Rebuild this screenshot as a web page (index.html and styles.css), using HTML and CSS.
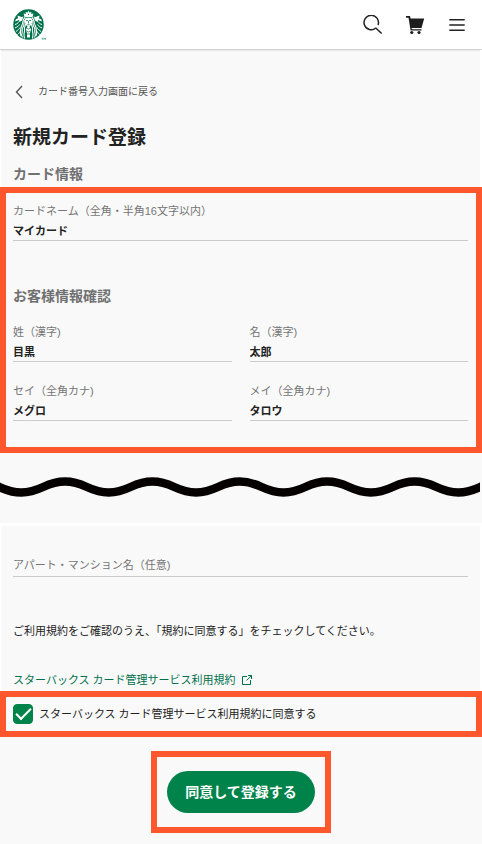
FILE: index.html
```html
<!DOCTYPE html>
<html lang="ja">
<head>
  <meta charset="UTF-8">
  <meta name="viewport" content="width=device-width, initial-scale=1">
  <title>新規カード登録</title>
  <link rel="stylesheet" href="styles.css">
</head>
<body>
  <header class="header">
    <a class="logo" href="#" aria-label="スターバックス">
      <svg width="33" height="32" viewBox="0 0 66 64">
        <circle cx="31" cy="31" r="30.500" fill="#00704a"/>
        <!-- crown -->
        <path d="M31 3l1.800 4 4-1-.5 4 4.500-.8-1.800 7.300H23l-1.800-7.300 4.500.8-.5-4 4 1z" fill="#fff"/>
        <path d="M31 8.500l1.500 3.500h-3z" fill="#00704a"/>
        <!-- tails -->
        <g fill="none" stroke="#fff" stroke-width="2">
          <path d="M12 25c-2 3-4 5-8 6M13 31c-2 3-4 5-9 7M14 37c-1 3-4 5-8 8M15 43c-1 3-3 5-6 8"/>
          <path d="M50 25c2 3 4 5 8 6M49 31c2 3 4 5 9 7M48 37c1 3 4 5 8 8M47 43c1 3 3 5 6 8"/>
        </g>
        <path d="M9 13l8 3 4-1-3 8-5 3-1-4-8 3 2-5 4-1z M53 13l-8 3-4-1 3 8 5 3 1-4 8 3-2-5-4-1z" fill="#fff"/>
        <!-- hair -->
        <g fill="none" stroke="#fff" stroke-width="2.200">
          <path d="M24 17c-6 5-3 10-6 15s-2 8-3 13 0 7 1 9"/>
          <path d="M24 22c-4 5 0 9-4 14s0 8-2 12 0 7 1 9"/>
          <path d="M25 30c0 5-3 6-2 10s-1 7-1 11 1 6 1 8"/>
          <path d="M38 17c6 5 3 10 6 15s2 8 3 13 0 7-1 9"/>
          <path d="M38 22c4 5 0 9 4 14s0 8 2 12 0 7-1 9"/>
          <path d="M37 30c0 5 3 6 2 10s1 7 1 11-1 6-1 8"/>
        </g>
        <!-- face and body -->
        <path d="M24 19q7-3 14 0v9q-2 5-5 7l3 6-2 7v9h-6v-9l-2-7 3-6q-3-2-5-7z" fill="#fff"/>
        <path d="M26 23h4M32 23h4M31 24v5M28.500 31.500h5M28 38l3 2 3-2M28 44l3 2 3-2M28 50h6" fill="none" stroke="#00704a" stroke-width="1.500"/>
        <path d="M57 58h4M59 58v4M62 62v-4l1.500 2 1.500-2v4" fill="none" stroke="#00704a" stroke-width=".8"/>
      </svg>
    </a>
    <nav class="header-nav">
      <button class="icon-button" type="button" aria-label="検索">
        <svg width="20" height="20" viewBox="0 0 20 20" fill="none" stroke="#222" stroke-width="1.500">
          <path d="M12.900 13A7.200 7.200 0 1 1 15 10"/>
          <path d="M12.500 12.700l6.200 5.800"/>
        </svg>
      </button>
      <button class="icon-button" type="button" aria-label="カート">
        <svg width="20" height="20" viewBox="0 0 20 20" fill="#1e1e1e">
          <path d="M1 1h4l.6 2.500h13.600L16.500 13H6.600l.3 1.200h9.600v1.300H5.600L3.500 2.700H1z"/>
          <circle cx="6.800" cy="17.500" r="1.600"/>
          <circle cx="14" cy="17.500" r="1.600"/>
        </svg>
      </button>
      <button class="icon-button" type="button" aria-label="メニュー">
        <svg width="20" height="20" viewBox="0 0 20 20" fill="none" stroke="#222" stroke-width="1.600">
          <path d="M2.300 4.700h15.400M2.300 10h15.400M2.300 15.200h15.400"/>
        </svg>
      </button>
    </nav>
  </header>

  <form class="form">
    <div class="intro">
      <a class="back" href="#">
        <svg width="10" height="14" viewBox="0 0 10 14" fill="none" stroke="#555" stroke-width="1.400"><path d="M8 1L2.500 7 8 13"/></svg>
        カード番号入力画面に戻る
      </a>
      <h1 class="title">新規カード登録</h1>
      <h2 class="subtitle">カード情報</h2>
    </div>

    <section class="highlight details">
      <div class="field">
        <label for="cardName">カードネーム（全角・半角16文字以内）</label>
        <input id="cardName" type="text" value="マイカード">
      </div>
      <h2 class="subtitle customer">お客様情報確認</h2>
      <div class="names">
        <div class="field">
          <label for="lastName">姓（漢字)</label>
          <input id="lastName" type="text" value="目黒">
        </div>
        <div class="field">
          <label for="firstName">名（漢字)</label>
          <input id="firstName" type="text" value="太郎">
        </div>
        <div class="field">
          <label for="lastKana">セイ（全角カナ)</label>
          <input id="lastKana" type="text" value="メグロ">
        </div>
        <div class="field">
          <label for="firstKana">メイ（全角カナ)</label>
          <input id="firstKana" type="text" value="タロウ">
        </div>
      </div>
    </section>

    <div class="wave">
      <svg viewBox="0 0 480 22" preserveAspectRatio="none">
        <path d="M-22.400 5.500c20 0 23.700 11 43.700 11s23.700-11 43.700-11 23.700 11 43.700 11 23.700-11 43.700-11 23.700 11 43.700 11 23.700-11 43.700-11 23.700 11 43.700 11 23.700-11 43.700-11 23.700 11 43.700 11 23.700-11 43.700-11 23.700 11 43.700 11 23.700-11 43.700-11" fill="none" stroke="#050101" stroke-width="8.500"/>
      </svg>
    </div>

    <section class="terms">
      <input class="address" type="text" placeholder="アパート・マンション名（任意)" aria-label="アパート・マンション名（任意)">
      <p class="note">ご利用規約をご確認のうえ、「規約に同意する」をチェックしてください。</p>
      <a class="terms-link" href="#">
        スターバックス カード管理サービス利用規約
        <svg width="10" height="10" viewBox="0 0 10 10" fill="none" stroke="#00704a"><path d="M5 1.500H.5v8h8V5M6 .5h3.500V4M9.500.5L4.500 5.500"/></svg>
      </a>
    </section>

    <div class="highlight agree">
      <input id="agree" type="checkbox" checked>
      <label for="agree">スターバックス カード管理サービス利用規約に同意する</label>
    </div>

    <div class="actions">
      <div class="highlight">
        <button class="submit" type="button">同意して登録する</button>
      </div>
    </div>
  </form>
</body>
</html>
```
FILE: styles.css
```css
* {
  box-sizing: border-box;
}
body {
  margin: 0;
  background-color: #f9f9f9;
  color: #222;
  font-family: "Liberation Sans", "Noto Sans CJK JP", sans-serif;
  font-size: 11px;
  line-height: 16px;
}
h1, h2, p {
  margin: 0;
}
a {
  text-decoration: none;
}
input, button {
  font-family: inherit;
}

/* Header */
.header {
  display: flex;
  align-items: center;
  justify-content: space-between;
  height: 50px;
  padding: 0 15px 0 13px;
  background-color: #fff;
  border-bottom: 1px solid #d4d4d4;
  box-shadow: 0 1px 1px #e8e8e8;
}
.logo, .icon-button, .icon-button svg, .logo svg {
  display: block;
}
.header-nav {
  display: flex;
  gap: 22px;
}
.icon-button {
  padding: 0;
  border: none;
  background: none;
  cursor: pointer;
}

/* Page top */
.intro {
  padding: 34px 12px 3px;
  border-left: 1px solid #fff;
  border-right: 2px solid #fff;
}
.back {
  display: flex;
  align-items: center;
  gap: 14px;
  color: #555;
  font-size: 10px;
  padding-left: 1px;
}
.title {
  margin-top: 24px;
  font-size: 19px;
  line-height: 28px;
}
.subtitle {
  color: #707070;
  font-size: 14px;
  line-height: 20px;
}
.intro .subtitle {
  margin-top: 12px;
}

/* Orange frames */
.highlight {
  border: 6px solid #ff572d;
}
.details {
  padding: 10px 8px 26px 7px;
}
.field label {
  display: block;
  color: #757575;
}
.field input {
  display: block;
  width: 100%;
  height: 22px;
  padding: 0;
  border: none;
  border-bottom: 1px solid #ccc;
  border-radius: 0;
  background: none;
  color: #222;
  font-size: 11px;
  font-weight: bold;
}
.customer {
  margin: 45px 0 18px;
}
.names {
  display: grid;
  grid-template-columns: 1fr 1fr;
  gap: 21px 18px;
}

/* Wavy cut */
.wave {
  padding: 23px 2px 25px 0;
  border-bottom: 3px solid #fff;
}
.wave svg {
  display: block;
  width: 100%;
  height: 22px;
}

.terms {
  padding: 28px 12px 3px;
  border-left: 1px solid #fff;
  border-right: 2px solid #fff;
}
.address {
  display: block;
  width: 100%;
  height: 23px;
  padding: 0;
  border: none;
  border-bottom: 1px solid #ccc;
  border-radius: 0;
  background: none;
  font-size: 11px;
}
.address::placeholder {
  color: #757575;
  opacity: 1;
}
.note {
  margin: 46px 0 33px;
}
.terms-link {
  display: flex;
  align-items: center;
  gap: 6px;
  color: #00704a;
}
.agree {
  display: flex;
  align-items: center;
  gap: 6px;
  height: 46px;
  padding: 0 7px;
}
.agree input {
  appearance: none;
  display: grid;
  place-items: center;
  width: 20px;
  height: 20px;
  margin: 0;
  border-radius: 4px;
  border: 1px solid #00834a;
}
.agree input:checked {
  background-color: #00834a;
}
.agree input:checked::before {
  content: "";
  width: 13px;
  height: 6px;
  margin-bottom: 4px;
  border-left: 2px solid #fff;
  border-bottom: 2px solid #fff;
  transform: rotate(-45deg);
}

.actions {
  display: flex;
  justify-content: center;
  padding: 14px 0 11px;
}
.actions .highlight {
  padding: 14px 10px;
}
.submit {
  display: block;
  padding: 11px 18px;
  border: none;
  border-radius: 21px;
  background-color: #00834a;
  color: #fff;
  font-size: 14px;
  font-weight: bold;
  line-height: 20px;
  cursor: pointer;
}
```
